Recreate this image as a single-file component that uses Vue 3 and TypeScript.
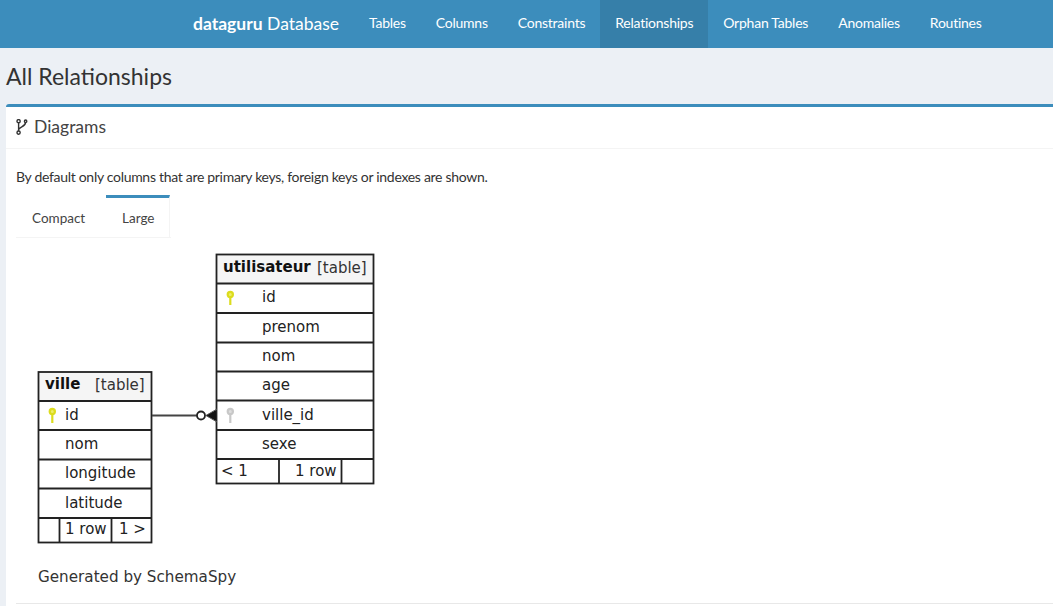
<script setup lang="ts">
interface Row { name: string; y: number; key?: string }
const navItems: string[] = ['Tables', 'Columns', 'Constraints', 'Relationships', 'Orphan Tables', 'Anomalies', 'Routines']
const userRows: Row[] = [
  { name: 'id', y: 302 }, { name: 'prenom', y: 332 }, { name: 'nom', y: 361 },
  { name: 'age', y: 390 }, { name: 'ville_id', y: 420 }, { name: 'sexe', y: 449 }
]
const userLines: number[] = [283.5, 313, 342.5, 371.5, 400.5, 430, 459]
const villeRows: Row[] = [
  { name: 'id', y: 420 }, { name: 'nom', y: 449 }, { name: 'longitude', y: 478 }, { name: 'latitude', y: 508 }
]
const villeLines: number[] = [401, 430, 459.5, 488.5, 518]
</script>

<template>
  <div class="page">
    <header class="topbar">
      <span class="brand"><b>dataguru</b> Database</span>
      <nav class="nav">
        <a v-for="item in navItems" :key="item" class="nav-item" :class="{ active: item === 'Relationships' }">{{ item }}</a>
      </nav>
    </header>
    <main class="content">
      <h1 class="title">All Relationships</h1>
      <section class="box">
        <div class="box-head">
          <svg class="fork" width="12" height="16" viewBox="0 0 12 16" fill="none" stroke="#333" stroke-width="1.4">
            <circle cx="2.6" cy="2.2" r="1.6" />
            <circle cx="2.6" cy="13.6" r="1.6" />
            <circle cx="9.6" cy="2.2" r="1.2" />
            <path d="M2.6 3.8V12M2.9 10.5C3.4 7.5 9.4 8 9.6 3.4" />
          </svg>
          <h3 class="box-title">Diagrams</h3>
        </div>
        <div class="box-body">
          <p class="note">By default only columns that are primary keys, foreign keys or indexes are shown.</p>
          <div class="tabs">
            <span class="tab">Compact</span>
            <span class="tab on">Large</span>
          </div>
          <svg class="diagram" width="1037" height="365" viewBox="16 238 1037 365" font-family="'DejaVu Sans', sans-serif" font-size="15" fill="#222">
            <!-- utilisateur -->
            <rect x="216.5" y="254.5" width="157" height="29" fill="#f5f5f5" />
            <rect x="216.5" y="254.5" width="157" height="229" fill="none" stroke="#222" stroke-width="1.8" />
            <line v-for="y in userLines" :key="'u' + y" x1="216" x2="374" :y1="y" :y2="y" stroke="#222" stroke-width="1.8" />
            <line x1="279" x2="279" y1="459" y2="484" stroke="#222" stroke-width="1.8" />
            <line x1="341.5" x2="341.5" y1="459" y2="484" stroke="#222" stroke-width="1.8" />
            <text x="223" y="272" font-weight="700" fill="#111">utilisateur</text>
            <text x="317" y="273" fill="#333">[table]</text>
            <text v-for="r in userRows" :key="'ur' + r.name" x="262" :y="r.y">{{ r.name }}</text>
            <text x="221" y="476">&lt; 1</text>
            <text x="295" y="476">1 row</text>
            <g stroke="#dcdc1e" fill="none" stroke-width="2.2">
              <circle cx="230.3" cy="294.5" r="2.6" fill="#eeee66" />
              <line x1="230.3" x2="230.3" y1="297" y2="305" />
            </g>
            <g stroke="#c8c8c8" fill="none" stroke-width="2.2">
              <circle cx="230.3" cy="411.5" r="2.6" fill="#ddd" />
              <line x1="230.3" x2="230.3" y1="414" y2="423" />
            </g>
            <!-- ville -->
            <rect x="38.5" y="372" width="113" height="29" fill="#f5f5f5" />
            <rect x="38.5" y="372" width="113" height="170.5" fill="none" stroke="#222" stroke-width="1.8" />
            <line v-for="y in villeLines" :key="'v' + y" x1="38" x2="152" :y1="y" :y2="y" stroke="#222" stroke-width="1.8" />
            <line x1="59.5" x2="59.5" y1="518" y2="543" stroke="#222" stroke-width="1.8" />
            <line x1="111.5" x2="111.5" y1="518" y2="543" stroke="#222" stroke-width="1.8" />
            <text x="45" y="389" font-weight="700" fill="#111">ville</text>
            <text x="95" y="390" fill="#333">[table]</text>
            <text v-for="r in villeRows" :key="'vr' + r.name" x="65" :y="r.y">{{ r.name }}</text>
            <text x="65" y="534">1 row</text>
            <text x="119" y="534">1 &gt;</text>
            <g stroke="#dcdc1e" fill="none" stroke-width="2.2">
              <circle cx="52.3" cy="411.5" r="2.6" fill="#eeee66" />
              <line x1="52.3" x2="52.3" y1="414" y2="423" />
            </g>
            <!-- connector -->
            <line x1="152" x2="197" y1="415.5" y2="415.5" stroke="#444" stroke-width="1.8" />
            <circle cx="201" cy="415.5" r="4" fill="#fff" stroke="#222" stroke-width="1.8" />
            <path d="M205.5 415.5L216 410V421Z" fill="#111" />
            <path d="M206 415.5L217 409M206 415.5L217 422" stroke="#555" stroke-width="1" />
            <text x="38" y="582" fill="#333" font-size="15.2">Generated by SchemaSpy</text>
          </svg>
          <div class="rule"></div>
        </div>
      </section>
    </main>
  </div>
</template>

<style>
html, body { margin: 0; overflow: hidden; }
</style>

<style scoped>
.page {
  width: 1053px;
  height: 606px;
  overflow: hidden;
  background: #ecf0f5;
  font-family: Lato, sans-serif;
  color: #333;
}
.topbar {
  display: flex;
  align-items: center;
  height: 48px;
  padding-left: 193px;
  padding-bottom: 2px;
  box-sizing: border-box;
  background: #3c8dbc;
  color: #fff;
}
.brand {
  font-size: 17.5px;
  width: 161px;
  flex: none;
}
.nav { display: flex; height: 48px; margin-bottom: -2px; }
.nav-item {
  display: flex;
  align-items: center;
  padding: 0 15px 3px;
  font-size: 14px;
  letter-spacing: -0.24px;
}
.nav-item.active { background: #367fa9; }
.content { padding-left: 6px; }
.title {
  margin: 0;
  height: 56px;
  font-size: 23px;
  font-weight: 400;
  line-height: 56px;
  color: #333;
}
.box {
  background: #fff;
  border-top: 3px solid #3c8dbc;
  border-radius: 3px 0 0 0;
  height: 500px;
}
.box-head {
  display: flex;
  align-items: center;
  gap: 6px;
  height: 42px;
  padding-left: 10px;
  padding-bottom: 2px;
  box-sizing: border-box;
  border-bottom: 1px solid #f4f4f4;
}
.box-title {
  margin: 0;
  font-size: 17.5px;
  font-weight: 400;
  color: #444;
}
.box-body { padding: 0 0 0 10px; }
.note {
  margin: 0;
  padding-top: 18px;
  height: 28px;
  font-size: 14px;
  line-height: 20px;
  letter-spacing: -0.3px;
}
.tabs {
  display: flex;
  height: 42px;
  border-bottom: 1px solid #f4f4f4;
  width: 155px;
}
.tab {
  display: flex;
  align-items: center;
  box-sizing: border-box;
  width: 90px;
  height: 42px;
  padding-left: 16px;
  border-top: 3px solid transparent;
  font-size: 13.5px;
  color: #444;
}
.tab.on {
  width: 64px;
  border-top-color: #3c8dbc;
  border-right: 1px solid #f4f4f4;
}
.diagram { display: block; }
.rule { height: 1px; background: #e8e8e8; }
</style>
